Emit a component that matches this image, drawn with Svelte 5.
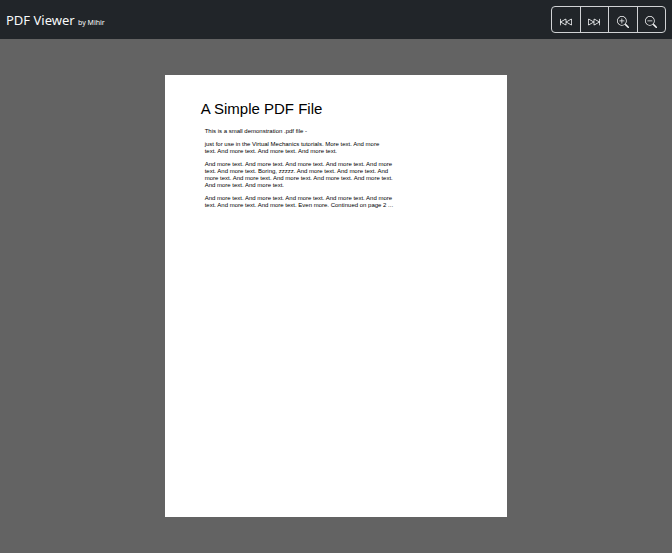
<script>
  const ratio = 612 / 790;
  let zoom = $state(1);

  const controls = [
    { id: 'prev', label: 'Previous page', run: () => {} },
    { id: 'next', label: 'Next page', run: () => {} },
    { id: 'in', label: 'Zoom in', run: () => (zoom = Math.min(2, zoom + 0.1)) },
    { id: 'out', label: 'Zoom out', run: () => (zoom = Math.max(0.5, zoom - 0.1)) }
  ];

  const paragraphs = [
    ['This is a small demonstration .pdf file -'],
    [
      'just for use in the Virtual Mechanics tutorials. More text. And more',
      'text. And more text. And more text. And more text.'
    ],
    [
      'And more text. And more text. And more text. And more text. And more',
      'text. And more text. Boring, zzzzz. And more text. And more text. And',
      'more text. And more text. And more text. And more text. And more text.',
      'And more text. And more text.'
    ],
    [
      'And more text. And more text. And more text. And more text. And more',
      'text. And more text. And more text. Even more. Continued on page 2 ...'
    ]
  ];
</script>

<div class="viewer">
  <header>
    <h1>PDF Viewer <small>by Mihir</small></h1>
    <div class="group" role="group" aria-label="Page controls">
      {#each controls as control (control.id)}
        <button type="button" aria-label={control.label} onclick={control.run}>
          <svg viewBox="0 0 16 16" fill="currentColor" aria-hidden="true">
            {#if control.id === 'prev'}
              <path d="M.5 3.5A.5.5 0 0 1 1 4v3.248l6.267-3.636c.52-.302 1.233.043 1.233.696v2.94l6.267-3.636c.52-.302 1.233.043 1.233.696v7.384c0 .653-.713.998-1.233.696L8.5 8.752v2.94c0 .653-.713.998-1.233.696L1 8.752V12a.5.5 0 0 1-1 0V4a.5.5 0 0 1 .5-.5zm7 1.133L1.696 8 7.5 11.367V4.633zm7.5 0L9.196 8 15 11.367V4.633z" />
            {:else if control.id === 'next'}
              <path d="M15.5 3.5a.5.5 0 0 1 .5.5v8a.5.5 0 0 1-1 0V8.752l-6.267 3.636c-.52.302-1.233-.043-1.233-.696v-2.94l-6.267 3.636C.713 12.69 0 12.345 0 11.692V4.308c0-.653.713-.998 1.233-.696L7.5 7.248v-2.94c0-.653.713-.998 1.233-.696L15 7.248V4a.5.5 0 0 1 .5-.5zM1 4.633v6.734L6.804 8 1 4.633zm7.5 0v6.734L14.304 8 8.5 4.633z" />
            {:else}
              <path fill-rule="evenodd" d="M6.5 12a5.5 5.5 0 1 0 0-11 5.5 5.5 0 0 0 0 11zM13 6.5a6.5 6.5 0 1 1-13 0 6.5 6.5 0 0 1 13 0z" />
              <path d="M10.344 11.742c.03.04.062.078.098.115l3.85 3.85a1 1 0 0 0 1.415-1.414l-3.85-3.85a1.007 1.007 0 0 0-.115-.1 6.538 6.538 0 0 1-1.398 1.4z" />
              {#if control.id === 'in'}
                <path fill-rule="evenodd" d="M6.5 3a.5.5 0 0 1 .5.5V6h2.500a.5.5 0 0 1 0 1H7v2.500a.5.5 0 0 1-1 0V7H3.500a.5.5 0 0 1 0-1H6V3.500a.5.5 0 0 1 .5-.5z" />
              {:else}
                <path fill-rule="evenodd" d="M3 6.500a.5.5 0 0 1 .5-.5h6a.5.5 0 0 1 0 1h-6a.5.5 0 0 1-.5-.5z" />
              {/if}
            {/if}
          </svg>
        </button>
      {/each}
    </div>
  </header>

  <main>
    <article style:width="{51 * zoom}%" style:aspect-ratio={ratio}>
      <h2>A Simple PDF File</h2>
      {#each paragraphs as lines}
        <p>
          {#each lines as line, i}{#if i > 0}<br />{/if}{line}{/each}
        </p>
      {/each}
    </article>
  </main>
</div>

<style>
  :global(body) {
    margin: 0;
    background: #636363;
  }

  .viewer {
    min-height: 100vh;
    display: flex;
    flex-direction: column;
    background: #636363;
  }

  header {
    display: flex;
    align-items: center;
    justify-content: space-between;
    padding: 6px;
    background: #212529;
    color: #f8f9fa;
  }

  h1 {
    margin: 0;
    padding-top: 4px;
    font: 400 13px/20px 'Noto Sans', 'Open Sans', sans-serif;
  }

  small {
    font-size: 7px;
  }

  .group {
    box-sizing: border-box;
    display: flex;
    width: 115px;
    height: 27px;
    border: 1px solid #d0d2d4;
    border-radius: 4px;
    overflow: hidden;
  }

  button {
    flex: 1;
    display: flex;
    align-items: center;
    justify-content: center;
    padding: 0;
    border: 0;
    background: transparent;
    color: #f8f9fa;
    cursor: pointer;
  }

  button + button {
    border-left: 1px solid #d0d2d4;
  }

  button:hover {
    background: #343a40;
  }

  svg {
    width: 12px;
    height: 12px;
    margin-top: 4px;
  }

  main {
    flex: 1;
    padding: 36px 0;
  }

  article {
    box-sizing: border-box;
    margin: 0 auto;
    padding: 24px 36px;
    background: #fff;
    color: #000;
    font-family: 'Liberation Sans', Arial, sans-serif;
    white-space: nowrap;
  }

  h2 {
    margin: 0 0 9px;
    font-size: 15px;
    font-weight: 400;
    line-height: 20px;
  }

  p {
    margin: 0 0 6px 4px;
    font-size: 6px;
    line-height: 7px;
  }
</style>
